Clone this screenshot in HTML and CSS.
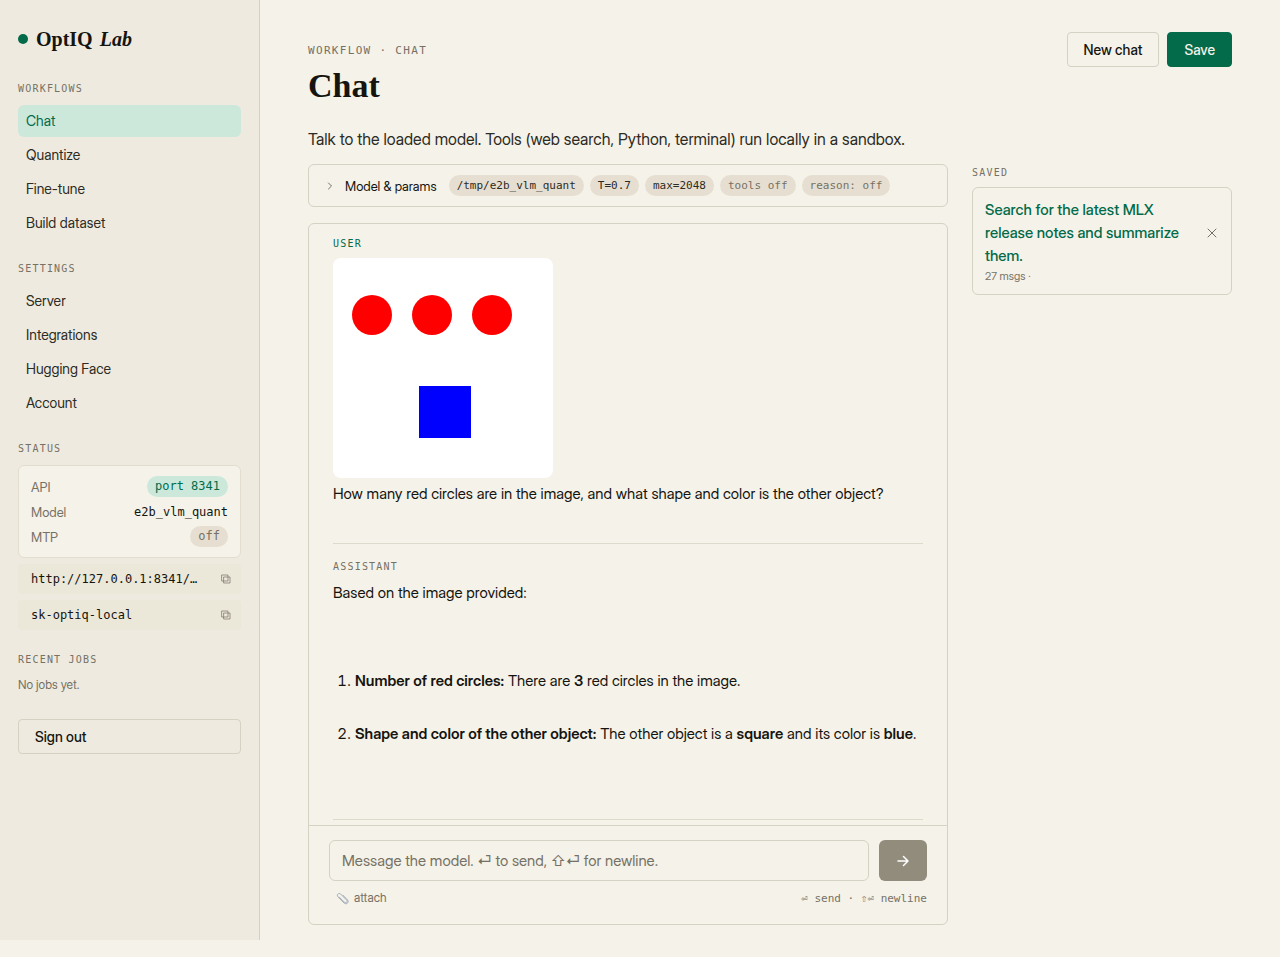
FILE: index.html
```html
<!DOCTYPE html>
<html lang="en">
<head>
    <meta charset="UTF-8">
    <meta name="viewport" content="width=device-width, initial-scale=1.0">
    <title>OptIQ Lab</title>
    <link rel="stylesheet" href="styles.css">
</head>
<body>
    <div class="layout">
        <aside class="sidebar">
            <a href="#" class="brand">
                <span class="brand-dot"></span>
                <span>OptIQ <em>Lab</em></span>
            </a>

            <nav class="section">
                <h2 class="label">Workflows</h2>
                <ul class="nav-list">
                    <li><a href="#" class="nav-link active">Chat</a></li>
                    <li><a href="#" class="nav-link">Quantize</a></li>
                    <li><a href="#" class="nav-link">Fine-tune</a></li>
                    <li><a href="#" class="nav-link">Build dataset</a></li>
                </ul>
            </nav>

            <nav class="section">
                <h2 class="label">Settings</h2>
                <ul class="nav-list">
                    <li><a href="#" class="nav-link">Server</a></li>
                    <li><a href="#" class="nav-link">Integrations</a></li>
                    <li><a href="#" class="nav-link">Hugging Face</a></li>
                    <li><a href="#" class="nav-link">Account</a></li>
                </ul>
            </nav>

            <section class="section">
                <h2 class="label">Status</h2>
                <dl class="status-card">
                    <div class="status-row"><dt>API</dt><dd class="pill pill-ok">port 8341</dd></div>
                    <div class="status-row"><dt>Model</dt><dd class="status-value">e2b_vlm_quant</dd></div>
                    <div class="status-row"><dt>MTP</dt><dd class="pill pill-muted">off</dd></div>
                </dl>
                <button type="button" class="copy-row">
                    <span>http://127.0.0.1:8341/…</span>
                    <svg class="copy-icon" viewBox="0 0 10 10" aria-hidden="true"><path d="M1 1h6v6H1zM3 3h6v6H3z"/></svg>
                </button>
                <button type="button" class="copy-row">
                    <span>sk-optiq-local</span>
                    <svg class="copy-icon" viewBox="0 0 10 10" aria-hidden="true"><path d="M1 1h6v6H1zM3 3h6v6H3z"/></svg>
                </button>
            </section>

            <section class="section">
                <h2 class="label">Recent jobs</h2>
                <p class="empty">No jobs yet.</p>
            </section>

            <button type="button" class="btn sign-out">Sign out</button>
        </aside>

        <main class="main">
            <header class="page-header">
                <div class="page-title">
                    <p class="eyebrow">Workflow · Chat</p>
                    <h1>Chat</h1>
                </div>
                <div class="actions">
                    <button type="button" class="btn">New chat</button>
                    <button type="button" class="btn btn-primary">Save</button>
                </div>
            </header>
            <p class="lede">Talk to the loaded model. Tools (web search, Python, terminal) run locally in a sandbox.</p>

            <div class="columns">
                <div class="chat-column">
                    <button type="button" class="params" aria-expanded="false">
                        <svg class="chevron" viewBox="0 0 6 8" aria-hidden="true"><path d="M1.5 1l3 3-3 3"/></svg>
                        <span class="params-title">Model &amp; params</span>
                        <span class="pills">
                            <span class="pill">/tmp/e2b_vlm_quant</span>
                            <span class="pill">T=0.7</span>
                            <span class="pill">max=2048</span>
                            <span class="pill pill-muted">tools off</span>
                            <span class="pill pill-muted">reason: off</span>
                        </span>
                    </button>

                    <section class="chat">
                        <div class="messages">
                            <article class="message">
                                <h2 class="label role-user">User</h2>
                                <svg class="attachment" viewBox="0 0 220 220" role="img" aria-label="Attached image">
                                    <rect width="220" height="220" fill="#fff"/>
                                    <circle cx="39" cy="57" r="20" fill="#f00"/>
                                    <circle cx="99" cy="57" r="20" fill="#f00"/>
                                    <circle cx="159" cy="57" r="20" fill="#f00"/>
                                    <rect x="86" y="128" width="52" height="52" fill="#00f"/>
                                </svg>
                                <p>How many red circles are in the image, and what shape and color is the other object?</p>
                            </article>
                            <article class="message">
                                <h2 class="label">Assistant</h2>
                                <p>Based on the image provided:</p>
                                <ol class="answer">
                                    <li><strong>Number of red circles:</strong> There are <strong>3</strong> red circles in the image.</li>
                                    <li><strong>Shape and color of the other object:</strong> The other object is a <strong>square</strong> and its color is <strong>blue</strong>.</li>
                                </ol>
                            </article>
                        </div>

                        <form class="composer" onsubmit="return false;">
                            <div class="composer-row">
                                <textarea class="prompt" rows="1" aria-label="Message" placeholder="Message the model. ⏎ to send, ⇧⏎ for newline."></textarea>
                                <button type="submit" class="send" aria-label="Send">
                                    <svg viewBox="0 0 12 12" aria-hidden="true"><path d="M1 6h10M6.500 1.500L11 6l-4.500 4.500"/></svg>
                                </button>
                            </div>
                            <div class="composer-foot">
                                <button type="button" class="attach">
                                    <svg viewBox="0 0 14 14" aria-hidden="true"><path d="M3.500 5.500l5.500 5.500c1.800 1.600 4-.6 2.400-2.400L5 2.200C3 .4.200 3 2 5l6.800 6.900c2.700 2.200 5.700-.8 3.500-3.500L7.500 3.500"/></svg>
                                    attach
                                </button>
                                <span class="hint">⏎ send · ⇧⏎ newline</span>
                            </div>
                        </form>
                    </section>
                </div>

                <aside class="saved">
                    <h2 class="label">Saved</h2>
                    <div class="saved-card">
                        <div class="saved-row">
                            <a href="#" class="saved-link">Search for the latest MLX release notes and summarize them.</a>
                            <button type="button" class="remove" aria-label="Remove">
                                <svg viewBox="0 0 10 10" aria-hidden="true"><path d="M1 1l8 8M9 1l-8 8"/></svg>
                            </button>
                        </div>
                        <p class="saved-meta">27 msgs ·</p>
                    </div>
                </aside>
            </div>
        </main>
    </div>
</body>
</html>
```

FILE: styles.css
```css
:root {
    --paper: #f5f2e9;
    --sidebar: #eeeadf;
    --line: #d5d1c3;
    --ink: #15140f;
    --text: #2c2b24;
    --muted: #757165;
    --green: #036b49;
    --mint: #cbe8db;
    --sand: #e6dfd1;
    --sans: "Inter Display", Inter, "Liberation Sans", sans-serif;
    --mono: "DejaVu Sans Mono", "Liberation Mono", monospace;
    --serif: "Liberation Serif", serif;
}

* {
    box-sizing: border-box;
}

body {
    margin: 0;
    background: var(--paper);
    color: var(--ink);
    font-family: var(--sans);
    font-size: 14px;
    font-variation-settings: "opsz" 32;
}

h1,
h2,
p,
ul,
ol,
dl,
dd {
    margin: 0;
    padding: 0;
}

a {
    color: inherit;
    text-decoration: none;
}

button,
textarea {
    font: inherit;
    font-variation-settings: inherit;
    color: inherit;
}

button {
    cursor: pointer;
}

svg {
    display: block;
    fill: none;
    stroke: currentColor;
    stroke-linecap: round;
    stroke-linejoin: round;
}

.layout {
    display: grid;
    grid-template-columns: 260px 1fr;
    min-height: calc(100vh - 17px);
    margin-bottom: 16px;
}

/* Sidebar */
.sidebar {
    display: flex;
    flex-direction: column;
    padding: 24px 18px;
    background: var(--sidebar);
    border-right: 1px solid var(--line);
}

.brand {
    display: flex;
    align-items: center;
    gap: 8px;
    margin-bottom: 26px;
    font-family: var(--serif);
    font-size: 20px;
    font-weight: bold;
    line-height: 30px;
}

.brand em {
    margin-left: 2px;
}

.brand-dot {
    width: 10px;
    height: 10px;
    border-radius: 50%;
    background: var(--green);
}

.section {
    margin-bottom: 21px;
}

.label {
    margin-bottom: 8px;
    color: var(--muted);
    font-family: var(--mono);
    font-size: 10px;
    font-weight: normal;
    line-height: 17px;
    letter-spacing: 0.12em;
    text-transform: uppercase;
}

.nav-list {
    display: grid;
    gap: 2px;
    list-style: none;
}

.nav-link {
    display: block;
    padding: 0 8px;
    border-radius: 6px;
    color: var(--text);
    line-height: 32px;
}

.nav-link.active {
    background: var(--mint);
    color: var(--green);
}

.status-card {
    padding: 8px 12px;
    border: 1px solid #e2ddcf;
    border-radius: 6px;
    background: var(--paper);
}

.status-row {
    display: flex;
    justify-content: space-between;
    align-items: center;
    height: 25px;
    color: var(--muted);
    font-size: 13px;
}

.status-value {
    color: var(--ink);
    font-family: var(--mono);
    font-size: 12px;
}

.pill {
    padding: 0 8px;
    border-radius: 11px;
    background: var(--sand);
    color: var(--text);
    font-family: var(--mono);
    font-size: 11px;
    line-height: 21px;
}

.status-row .pill {
    font-size: 12px;
}

.pill-ok {
    background: var(--mint);
    color: var(--green);
}

.pill-muted,
.status-row .pill-muted {
    color: var(--muted);
}

.copy-row {
    display: flex;
    justify-content: space-between;
    align-items: center;
    width: 100%;
    height: 30px;
    margin-top: 6px;
    padding: 0 10px 0 13px;
    border: 0;
    border-radius: 4px;
    background: #ebe7d9;
    font-family: var(--mono);
    font-size: 12px;
}

.copy-icon {
    width: 10px;
    height: 10px;
    color: var(--muted);
    stroke-width: 0.7;
}

.empty {
    color: var(--muted);
    font-size: 12px;
    line-height: 18px;
}

.btn {
    height: 35px;
    padding: 0 16px;
    border: 1px solid var(--line);
    border-radius: 4px;
    background: transparent;
    font-size: 14px;
    font-weight: 500;
}

.btn-primary {
    border-color: var(--green);
    background: var(--green);
    color: var(--paper);
}

.sign-out {
    margin-top: 4px;
    text-align: left;
}

/* Main */
.main {
    display: flex;
    flex-direction: column;
    padding: 32px 48px 15px;
}

.page-header {
    display: flex;
    justify-content: space-between;
}

.page-title {
    padding-top: 10px;
}

.eyebrow {
    color: var(--muted);
    font-family: var(--mono);
    font-size: 11px;
    line-height: 18px;
    letter-spacing: 0.12em;
    text-transform: uppercase;
}

h1 {
    font-family: var(--serif);
    font-size: 34px;
    line-height: 52px;
}

.actions {
    display: flex;
    gap: 8px;
}

.lede {
    margin: 14px 0 12px;
    color: var(--text);
    font-size: 16px;
    line-height: 26px;
}

.columns {
    display: grid;
    flex: 1;
    grid-template-columns: 1fr 260px;
    gap: 24px;
}

.chat-column {
    display: flex;
    flex-direction: column;
    gap: 16px;
}

.params {
    display: flex;
    align-items: center;
    gap: 12px;
    height: 43px;
    padding: 0 18px;
    border: 1px solid var(--line);
    border-radius: 6px;
    background: transparent;
    font-size: 13px;
}

.chevron {
    width: 6px;
    height: 8px;
    color: var(--muted);
}

.pills {
    display: flex;
    gap: 6px;
}

.chat {
    display: flex;
    flex: 1;
    flex-direction: column;
    border: 1px solid var(--line);
    border-radius: 6px;
}

.messages {
    flex: 1;
    padding: 0 24px 5px;
}

.message {
    padding: 11px 0 37px;
    border-bottom: 1px solid #ddd9cc;
    font-size: 15px;
    line-height: 24px;
}

.message + .message {
    padding-top: 14px;
}

.message .label {
    margin-bottom: 6px;
}

.message .role-user {
    color: var(--green);
}

.attachment {
    width: 220px;
    height: 220px;
    margin-bottom: 4px;
    border-radius: 8px;
    stroke: none;
}

.answer {
    display: grid;
    gap: 29px;
    padding: 64px 0 36px 22px;
}

.answer strong {
    font-weight: 600;
}

.composer {
    padding: 14px 20px 15px;
    border-top: 1px solid var(--line);
}

.composer-row {
    display: flex;
    gap: 10px;
}

.prompt {
    flex: 1;
    height: 41px;
    padding: 8px 12px;
    border: 1px solid var(--line);
    border-radius: 6px;
    background: transparent;
    font-size: 15px;
    line-height: 24px;
    resize: none;
}

.prompt::placeholder {
    color: var(--muted);
}

.send {
    display: grid;
    place-items: center;
    width: 48px;
    height: 41px;
    border: 0;
    border-radius: 6px;
    background: #928c7d;
    color: #fff;
}

.send svg {
    width: 12px;
    height: 12px;
    stroke-width: 1.5;
}

.composer-foot {
    display: flex;
    justify-content: space-between;
    align-items: center;
    margin-top: 6px;
    color: var(--muted);
}

.attach {
    display: flex;
    align-items: center;
    gap: 5px;
    padding: 0 7px;
    border: 0;
    background: transparent;
    font-size: 12px;
    line-height: 22px;
}

.attach svg {
    width: 13px;
    height: 13px;
    color: #9aa7b4;
}

.hint {
    font-family: var(--mono);
    font-size: 11px;
}

/* Saved chats */
.saved .label {
    margin-bottom: 6px;
}

.saved-card {
    padding: 10px 14px 9px 12px;
    border: 1px solid var(--line);
    border-radius: 6px;
}

.saved-row {
    display: flex;
    justify-content: space-between;
    align-items: center;
    gap: 24px;
}

.saved-link {
    color: var(--green);
    font-size: 15px;
    font-weight: 500;
    line-height: 23px;
}

.saved-meta {
    color: var(--muted);
    font-size: 11px;
    line-height: 18px;
}

.remove {
    padding: 0;
    border: 0;
    background: transparent;
    color: var(--muted);
}

.remove svg {
    width: 10px;
    height: 10px;
}
```
